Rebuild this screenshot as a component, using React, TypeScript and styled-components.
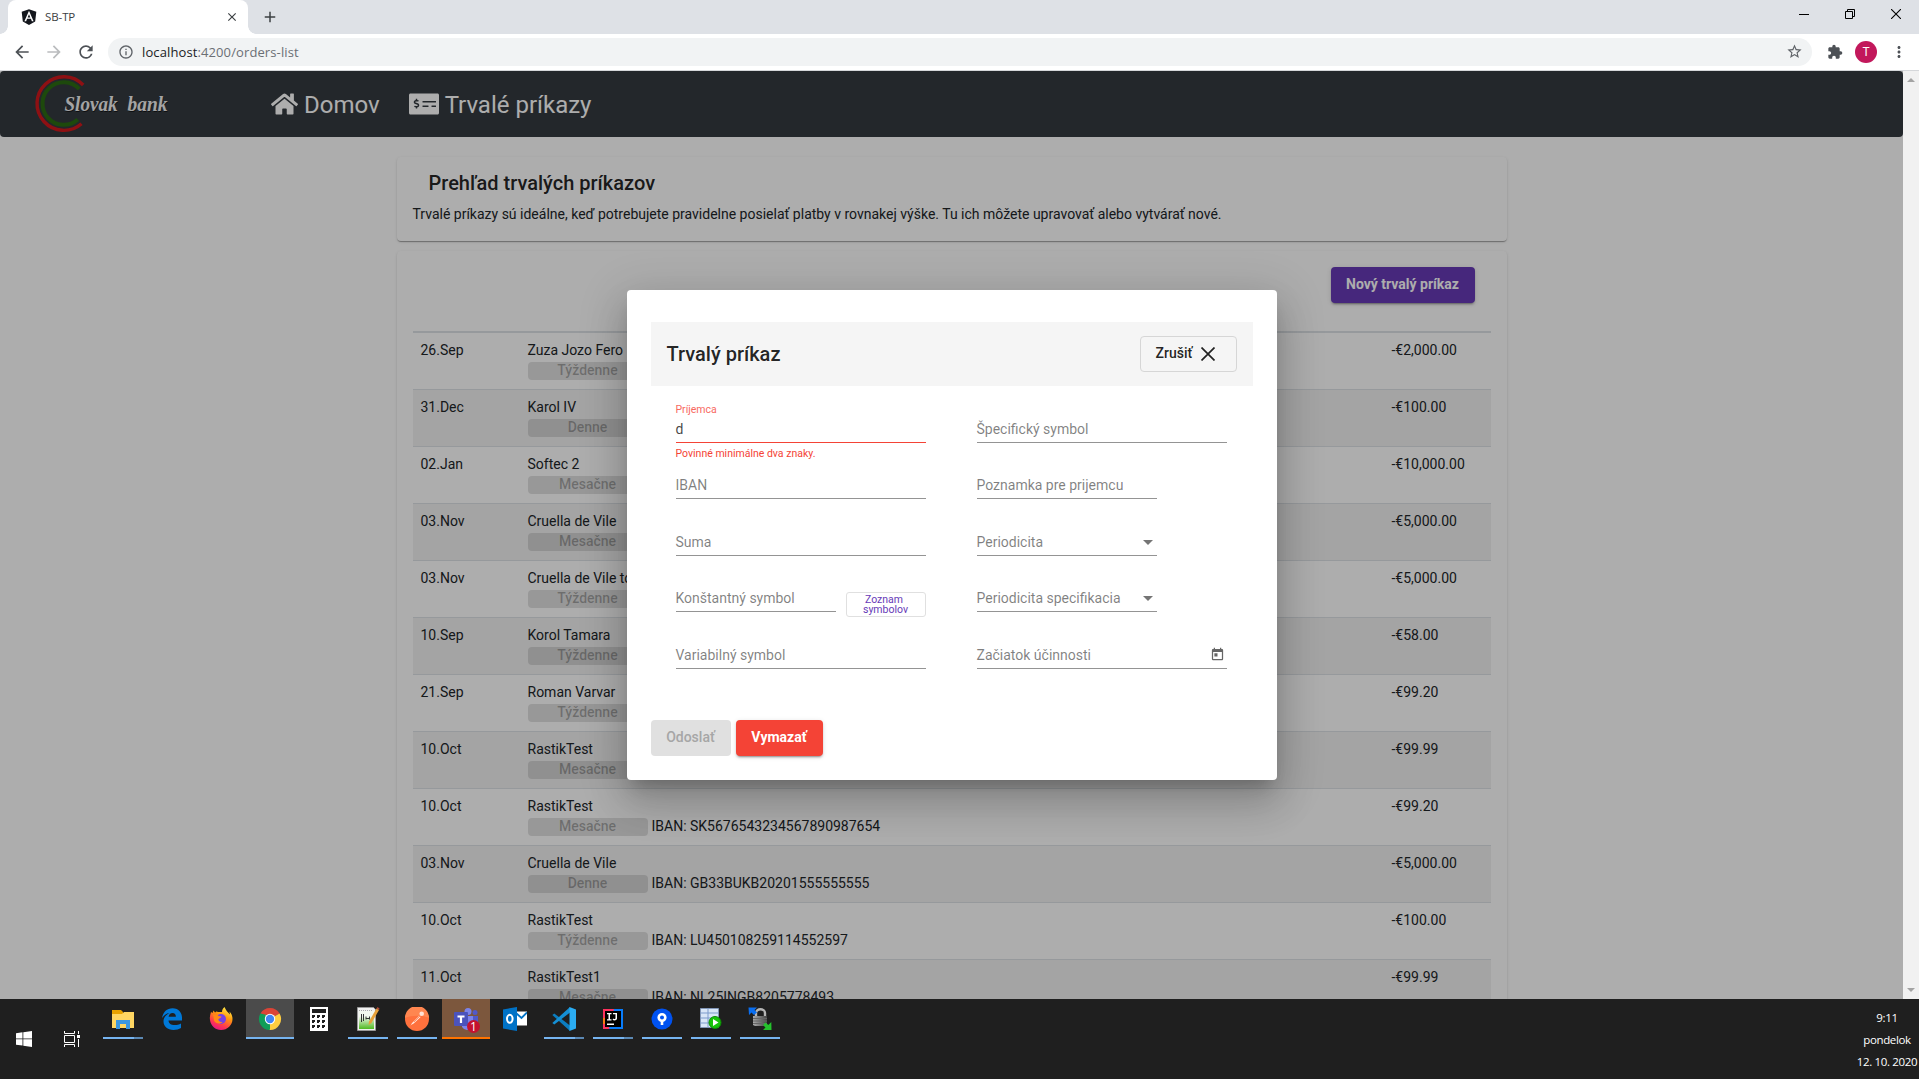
import React from "react";
import styled, { createGlobalStyle, css } from "styled-components";
import { FaAngular, FaHome, FaMoneyCheckAlt } from "react-icons/fa";
import {
  MdArrowBack, MdArrowForward, MdRefresh, MdInfoOutline, MdStarBorder,
  MdExtension, MdMoreVert, MdToday, MdClose, MdAdd,
} from "react-icons/md";

const Global = createGlobalStyle`
  * { box-sizing: border-box; }
  html, body { margin: 0; padding: 0; overflow: hidden; }
  body { font-family: Roboto, "Liberation Sans", sans-serif; font-size: 14px; color: #212529; }
  svg { display: block; flex: none; }
`;

const Screen = styled.div`
  width: 1919px; height: 1079px; display: flex; flex-direction: column; overflow: hidden; background: #fff;
`;

/* ---------- browser chrome ---------- */
const TabStrip = styled.div`
  height: 34px; flex: none; background: #dee1e6; display: flex; padding-left: 8px; color: #3c4043;
`;
const Tab = styled.div`
  position: relative; width: 240px; height: 34px; background: #fff; border-radius: 8px 8px 0 0;
  display: flex; align-items: center; padding: 0 9px 0 12px;
  font: 12px/16px "Open Sans", "Noto Sans", sans-serif;
  &::before, &::after { content: ""; position: absolute; bottom: 0; width: 8px; height: 8px; }
  &::before { left: -8px; background: radial-gradient(circle at 0 0, #dee1e6 7.5px, #fff 8px); }
  &::after { right: -8px; background: radial-gradient(circle at 100% 0, #dee1e6 7.5px, #fff 8px); }
`;
const TabTitle = styled.span`
  flex: 1; margin-left: 7px; font-size: 11.5px; letter-spacing: -0.1px;
`;
const NewTab = styled.div`
  display: flex; align-items: center; margin-left: 13px;
`;
const WindowButtons = styled.div`
  margin-left: auto; display: flex; height: 28px; color: #000;
`;
const WindowButton = styled.div`
  width: 46px; display: grid; place-items: center;
`;
const Toolbar = styled.div`
  height: 37px; flex: none; border-bottom: 1px solid #d5d7da; display: flex; align-items: center; color: #5f6368;
  padding-bottom: 1px;
`;
const NavIcon = styled.div<{ $w: number; $dim?: boolean; $shift?: number }>`
  width: ${(p) => p.$w}px; display: flex; justify-content: center; color: ${(p) => (p.$dim ? "#babcbe" : "#4d5156")};
  padding-left: ${(p) => p.$shift || 0}px;
`;
const Omnibox = styled.div`
  height: 28px; flex: 1; margin-left: 6px; background: #f1f3f4; border-radius: 14px; display: flex; align-items: center;
  padding: 0 9px 0 10px; font: 13px/20px "Open Sans", "Noto Sans", sans-serif; letter-spacing: 0.11px;
`;
const Url = styled.span`
  flex: 1; margin-left: 8px; color: #6b6f74;
  b { font-weight: 400; color: #202124; }
`;
const Avatar = styled.div`
  width: 22px; height: 22px; border-radius: 50%; background: #c2185b; color: #fff; font-size: 12px; line-height: 22px; text-align: center;
`;

/* ---------- page ---------- */
const Viewport = styled.div`
  height: 928px; flex: none; display: flex;
`;
const Page = styled.div`
  position: relative; width: 1903px; height: 928px; overflow: hidden; background: #fff;
`;
const Scrollbar = styled.div`
  width: 16px; background: #f1f1f1; display: flex; flex-direction: column; justify-content: space-between; align-items: center; padding: 7px 0;
`;
const Navbar = styled.nav`
  height: 66px; background: #343a40; border-radius: 4px; display: flex; align-items: center; padding-left: 32px; color: #fff;
`;
const LogoBox = styled.div` width: 239px; `;
const NavLink = styled.a`
  display: flex; align-items: center; font-size: 24px; line-height: 36px; margin-right: 29px; gap: 6px;
  span { padding-top: 2px; }
`;
const Container = styled.main`
  width: 1110px; margin: 20px auto 0; display: flex; flex-direction: column; gap: 10px;
`;
const Card = styled.section<{ $tall?: boolean }>`
  border-radius: 4px; background: #fff; height: ${(p) => (p.$tall ? "1100px" : "84px")};
  padding: ${(p) => (p.$tall ? "16px" : "10px 16px")};
  box-shadow: 0 2px 1px -1px rgba(0,0,0,.2), 0 1px 1px 0 rgba(0,0,0,.14), 0 1px 3px 0 rgba(0,0,0,.12);
`;
const CardTitle = styled.h1`
  margin: 0 0 5px; padding-left: 16px; font-size: 20px; font-weight: 500; line-height: 32px; color: rgba(0,0,0,.87);
`;
const Text = styled.p` margin: 0; line-height: 20px; `;
const CardActions = styled.div`
  display: flex; justify-content: flex-end; padding-right: 16px; height: 64px;
`;
type Kind = "primary" | "warn" | "disabled" | "outline";
const kinds = {
  primary: css`background: #673ab7; color: #fff; font-weight: 700;`,
  warn: css`background: #f44336; color: #fff; font-weight: 700;`,
  disabled: css`background: #e0e0e0; color: #a6a6a6; font-weight: 500;`,
  outline: css`background: transparent; border: 1px solid #d6d6d6; color: rgba(0,0,0,.87); font-weight: 500;`,
};
const Button = styled.button<{ $kind: Kind; $w: number }>`
  width: ${(p) => p.$w}px; height: 36px; padding: 0 0 2px; border: 0; border-radius: 4px;
  display: flex; align-items: center; justify-content: center; white-space: nowrap;
  font-family: inherit; font-size: 14px; line-height: 34px;
  ${(p) => kinds[p.$kind]}
  ${(p) => (p.$kind === "primary" || p.$kind === "warn") &&
    css`box-shadow: 0 3px 1px -2px rgba(0,0,0,.2), 0 2px 2px 0 rgba(0,0,0,.14), 0 1px 5px 0 rgba(0,0,0,.12);`}
`;
const Table = styled.div` border-top: 2px solid #dee2e6; `;
const Row = styled.div<{ $odd: boolean }>`
  height: 57px; border-bottom: 1px solid #dee2e6; padding: 7px 0 0 8px; display: grid;
  grid-template-columns: 107px 864px 1fr; line-height: 20px; background: ${(p) => (p.$odd ? "#f2f2f2" : "#fff")};
`;
const BadgeLine = styled.div` display: flex; gap: 4px; `;
const Badge = styled.span`
  width: 120px; height: 18px; margin-top: 2px; border-radius: 4px; background: rgba(0,0,0,.12); color: rgba(0,0,0,.28);
  font-weight: 500; text-align: center; line-height: 17px;
`;

/* ---------- dialog ---------- */
const Backdrop = styled.div`
  position: absolute; inset: 0; background: rgba(0,0,0,.32); display: flex; align-items: center; justify-content: center;
`;
const Dialog = styled.div`
  width: 650px; height: 490px; padding: 32px 24px 24px; border-radius: 4px; background: #fff;
  box-shadow: 0 11px 15px -7px rgba(0,0,0,.2), 0 24px 38px 3px rgba(0,0,0,.14), 0 9px 46px 8px rgba(0,0,0,.12);
`;
const DialogHeader = styled.header`
  height: 64px; padding: 0 16px; background: #f5f5f5; display: flex; align-items: center; justify-content: space-between;
  h2 { margin: 0; font-size: 20px; font-weight: 500; line-height: 32px; color: rgba(0,0,0,.87); }
  svg { margin: 1px 5px 0 9px; }
`;
const Form = styled.div`
  display: grid; grid-template-columns: 250px 250px; column-gap: 51px; padding-left: 25px;
  grid-template-rows: 57px 56px 57px 56px 57px;
`;
const FieldCell = styled.div` display: flex; align-items: flex-end; gap: 10px; `;
const Field = styled.div<{ $w: number; $bad?: boolean }>`
  position: relative; width: ${(p) => p.$w}px; display: flex; justify-content: space-between; align-items: center;
  border-bottom: 1px solid ${(p) => (p.$bad ? "#f44336" : "#949494")}; height: 25px; padding-bottom: 3px;
  line-height: 20px; color: ${(p) => (p.$bad ? "rgba(0,0,0,.74)" : "rgba(0,0,0,.5)")};
`;
const FloatLabel = styled.span`
  position: absolute; left: 0; top: -14px; font-size: 10.5px; line-height: 12px; color: #f8695f;
`;
const ErrorText = styled.span`
  position: absolute; left: 0; top: 29px; font-size: 10.5px; line-height: 14px; color: #f44336; white-space: nowrap;
`;
const Arrow = styled.i`
  border: 5px solid transparent; border-top-color: rgba(0,0,0,.54); border-bottom: 0; margin: 1px 4px 0 0;
`;
const CalendarSlot = styled.span` color: rgba(0,0,0,.6); margin-right: 2px; `;
const SymbolsButton = styled.button`
  width: 80px; height: 25px; margin-bottom: -5px; padding: 1px 14px 0; background: #fff; border: 1px solid #e0e0e0; border-radius: 3px;
  color: #673ab7; font: 400 10.5px/10px Roboto, sans-serif; text-align: center;
  &::first-line { word-spacing: 0; }
  span { display: block; }
  span:first-child { margin-right: 3px; }
`;
const DialogActions = styled.footer` display: flex; gap: 5px; margin-top: 51px; `;

/* ---------- taskbar ---------- */
const Taskbar = styled.div`
  height: 80px; flex: none; background: #1f1f1f; display: flex; color: #fff;
`;
const SystemButton = styled.div`
  width: 48px; height: 80px; display: grid; place-items: center;
`;
const Apps = styled.div` display: flex; gap: 1px; margin-left: 3px; `;
const TaskButton = styled.div<{ $bg?: string }>`
  width: 48px; height: 40px; display: flex; flex-direction: column; align-items: center; justify-content: space-between;
  background: linear-gradient(${(p) => p.$bg || "transparent"}, ${(p) => p.$bg || "transparent"}) 0 0 / 100% 38px no-repeat;
  padding-top: 8px;
`;
const Underline = styled.div<{ $w: number; $color: string; $stack?: boolean }>`
  width: ${(p) => p.$w}px; height: 2px;
  background: ${(p) => (p.$stack ? `linear-gradient(90deg, ${p.$color} 31px, #5b88b3 31px)` : p.$color)};
`;
const Clock = styled.div`
  margin-left: auto; width: 64px; padding-top: 8px; text-align: center; white-space: nowrap;
  font: 11.5px/22px "Open Sans", "Noto Sans", sans-serif; letter-spacing: -0.35px;
  span { display: block; }
`;

const orders = [
  ["26.Sep", "Zuza Jozo Fero", "Týždenne", "", "-€2,000.00"],
  ["31.Dec", "Karol IV", "Denne", "", "-€100.00"],
  ["02.Jan", "Softec 2", "Mesačne", "", "-€10,000.00"],
  ["03.Nov", "Cruella de Vile", "Mesačne", "", "-€5,000.00"],
  ["03.Nov", "Cruella de Vile to", "Týždenne", "", "-€5,000.00"],
  ["10.Sep", "Korol Tamara", "Týždenne", "", "-€58.00"],
  ["21.Sep", "Roman Varvar", "Týždenne", "", "-€99.20"],
  ["10.Oct", "RastikTest", "Mesačne", "", "-€99.99"],
  ["10.Oct", "RastikTest", "Mesačne", "SK5676543234567890987654", "-€99.20"],
  ["03.Nov", "Cruella de Vile", "Denne", "GB33BUKB20201555555555", "-€5,000.00"],
  ["10.Oct", "RastikTest", "Týždenne", "LU450108259114552597", "-€100.00"],
  ["11.Oct", "RastikTest1", "Mesačne", "NL25INGB8205778493", "-€99.99"],
];

const Logo = () => (
  <svg width="150" height="62" viewBox="32 73 150 62">
    <path d="M83.200 85 A26.800 26.800 0 1 0 81.500 123.700" fill="none" stroke="#d2191c" strokeWidth="3.4" />
    <path d="M79.200 89 A21.200 21.300 0 1 0 77.800 119.500" fill="none" stroke="#2b6c12" strokeWidth="4" />
    <g fontFamily="'Liberation Serif', serif" fontStyle="italic" fontWeight="700" fontSize="21.500">
      <g fill="#14171a">
        <text x="65" y="112" textLength="53" lengthAdjust="spacingAndGlyphs">Slovak</text>
        <text x="128" y="112" textLength="40" lengthAdjust="spacingAndGlyphs">bank</text>
      </g>
      <g fill="#f2f2f2">
        <text x="64.500" y="111" textLength="53" lengthAdjust="spacingAndGlyphs">Slovak</text>
        <text x="127.500" y="111" textLength="40" lengthAdjust="spacingAndGlyphs">bank</text>
      </g>
    </g>
  </svg>
);

const FolderIcon = () => (
  <svg width="24" height="24" viewBox="0 0 24 24">
    <path d="M1 3h9l2 2v4H1z" fill="#e8a200" />
    <path d="M1 7h10l2-2h10v16H1z" fill="#ffd662" />
    <path d="M5 13h14v9h-4v-5H9v5H5z" fill="#3b97e0" />
  </svg>
);
const EdgeIcon = () => (
  <svg width="24" height="24" viewBox="0 0 24 24">
    <path d="M2 11.2C3 5 7 1.2 12.5 1.2 19 1.2 22 6 22 10.500v3H8.500c.2 3.200 2.600 4.600 6 4.600 2.400 0 4.700-.6 6.500-1.700v4.700c-2 1.200-4.700 1.900-7.500 1.900-6 0-10-3.400-10-8.700C3.500 10.500 6 7.700 9.500 6 6 6.500 3.600 8.400 2 11.200zM8.600 9.800h7.300c0-2.400-1.200-3.800-3.400-3.800-2.100 0-3.500 1.500-3.900 3.800z" fill="#0078d7" />
  </svg>
);
const FirefoxIcon = () => (
  <svg width="24" height="24" viewBox="0 0 24 24">
    <defs>
      <linearGradient id="ff" x1="0.8" y1="0" x2="0.3" y2="1">
        <stop offset="0" stopColor="#fff44f" /><stop offset=".4" stopColor="#ff980e" /><stop offset=".75" stopColor="#ff3750" /><stop offset="1" stopColor="#e31587" />
      </linearGradient>
    </defs>
    <path d="M15.500 0c-2 1.500-2.500 3.500-2.500 5h-4.500C8 4 7 5 6 5.500L4.500 3.500 3.500 6 2 5C1 8 .6 10.500 1 13c.8 6 5.500 10 11 10 6.500 0 11.500-5 11.500-11 0-3-1-5.500-3-7.500l.5 3C18.500 5 17 3.500 15.500 0z" fill="url(#ff)" />
    <circle cx="12" cy="12" r="5" fill="#7542e5" />
    <path d="M3.500 8c3-1.500 5-.5 6 1l3 .5c-.5 1.500-2 1.500-3 2.500-.5 2 1.500 3.500 4 3-2 2.500-7 2-8.500-1.500C4.500 11 5 9 3.500 8z" fill="#ff8a16" />
  </svg>
);
const ChromeIcon = () => (
  <svg width="24" height="24" viewBox="0 0 24 24">
    <path d="M12 12 2.470 6.500A11 11 0 0 1 21.530 6.500z" fill="#db4437" />
    <path d="M12 12 21.530 6.500A11 11 0 0 1 12 23z" fill="#ffcd40" />
    <path d="M12 12 12 23A11 11 0 0 1 2.470 6.500z" fill="#0f9d58" />
    <path d="M12 7h9.800L21.500 6.500H11z" fill="#db4437" />
    <path d="M16.300 14.500 11.500 23h.5l5-6z" fill="#ffcd40" />
    <path d="M2.470 6.500 7.700 14.500 9 8z" fill="#0f9d58" />
    <circle cx="12" cy="12" r="5.200" fill="#fff" /><circle cx="12" cy="12" r="4.200" fill="#4285f4" />
  </svg>
);
const CalcIcon = () => (
  <svg width="24" height="24" viewBox="0 0 24 24">
    <path d="M3 0h18v24H3z" fill="#fff" /><path d="M5 2h14v4H5z" fill="#1f1f1f" />
    {[8, 13, 18].map((y) => [5, 10, 15].map((x) => <path key={`${x}-${y}`} d={`M${x} ${y}h3v2h-1v1h-2z`} fill="#1f1f1f" />))}
  </svg>
);
const NotepadIcon = () => (
  <svg width="24" height="24" viewBox="0 0 24 24">
    <defs><linearGradient id="np" x1="0" y1="0" x2="0" y2="1"><stop offset=".3" stopColor="#f2f7ee" /><stop offset="1" stopColor="#4fba20" /></linearGradient></defs>
    <path d="M1.500.5h16l2 2v21h-18z" fill="#f0f0f0" stroke="#999" /><path d="M3 4h15v18H3z" fill="url(#np)" />
    <path d="M3 3.500h14" stroke="#aaa" strokeDasharray="1 1" />
    <path d="M5.500 7v8M7.500 7v7M10 11.500h4M10 9.500v3M13.500 9.500v3" stroke="#333" fill="none" />
    <path d="M20.500 1.500 23 3l-7.500 13-3 2 .5-3.500z" fill="#e7a13a" /><path d="m20.500 1.500 1-1.500L23.500 1.500 23 3z" fill="#b34d3b" />
  </svg>
);
const PostmanIcon = () => (
  <svg width="24" height="24" viewBox="0 0 24 24">
    <circle cx="12" cy="12" r="12" fill="#ff713d" /><path d="M0 11A12 12 0 0 1 24 11c-6-3-17-3-24 0z" fill="#ff8650" />
    <path d="m5 19.500 2-3.500 7-7 1.700 1-7 6.500-2.700 1.500z" fill="#ffe9df" /><circle cx="16.700" cy="6.800" r="2.300" fill="#ffe2d5" /><path d="m9 15 6-6" stroke="#ff713d" strokeWidth=".7" />
  </svg>
);
const TeamsIcon = () => (
  <svg width="28" height="26" viewBox="0 0 28 26">
    <circle cx="16" cy="4.500" r="3.500" fill="#7b83eb" /><circle cx="23" cy="5.500" r="2.500" fill="#5059c9" />
    <path d="M18 9h8v8a4 4 0 0 1-8 2z" fill="#5059c9" /><path d="M10 9h11v9a6 6 0 0 1-11 2z" fill="#7b83eb" />
    <rect x="2" y="5" width="14" height="14" rx="1" fill="#4b53bc" /><path d="M5.500 8.500h7v2h-2.400V16H7.900v-5.500H5.500z" fill="#fff" />
    <circle cx="21.500" cy="19.500" r="6.500" fill="#c4122f" />
    <text x="21.500" y="24" fontFamily="Open Sans, sans-serif" fontSize="12" fill="#fff" textAnchor="middle">1</text>
  </svg>
);
const OutlookIcon = () => (
  <svg width="24" height="24" viewBox="0 0 24 24">
    <path d="M12 4.500h12v14H12z" fill="#fff" /><path d="m13 6 5.500 5L24 5.500" stroke="#0072c6" strokeWidth="1.800" fill="none" />
    <path d="M0 2.500 14 0v24L0 21.500z" fill="#0072c6" /><ellipse cx="6.800" cy="11.800" rx="2.800" ry="4" fill="none" stroke="#fff" strokeWidth="2" />
  </svg>
);
const CodeIcon = () => (
  <svg width="24" height="24" viewBox="0 0 24 24">
    <path d="M.3 8 2.300 6.500 18 18.500V24z" fill="#0c7dbf" /><path d="M.3 16 2.300 17.500 18 5.500V0z" fill="#1590d5" />
    <path d="M17.500 0 24 2.500v19L17.500 24z" fill="#2bacf2" />
  </svg>
);
const IdeaIcon = () => (
  <svg width="24" height="24" viewBox="0 0 24 24">
    <path d="M2 2h20v20H2z" fill="#087cfa" /><path d="M2 2h11L8 22H2z" fill="#fe315d" /><path d="M2 11h3v6H2z" fill="#f97a12" />
    <path d="M4 4h16v16H4z" fill="#000" /><path d="M6 16.500h7V18H6zM6 6h4.500v1.200H9v5h1.500v1.200H6v-1.200h1.500v-5H6zM12 6h4v5.500c0 2-3.500 2.600-4.500 1l1-1c.6.800 2 .6 2-.3V7.200H12z" fill="#fff" />
  </svg>
);
const SourceIcon = () => (
  <svg width="24" height="24" viewBox="0 0 24 24">
    <circle cx="12" cy="12" r="10.500" fill="#0052f0" /><circle cx="12" cy="10.500" r="3.300" fill="none" stroke="#fff" strokeWidth="2.600" /><path d="M10.700 14h2.600v4h-2.600z" fill="#fff" />
  </svg>
);
const ServerIcon = () => (
  <svg width="24" height="24" viewBox="0 0 24 24">
    <path d="M1.500 1.500h18v19h-18z" fill="#d8e6f7" stroke="#8195b5" /><path d="M1.500 6h18M1.500 11h18M1.500 16h18M9 1.500v19" stroke="#7c9bcb" />
    <circle cx="16" cy="15.500" r="6" fill="#17c40b" stroke="#0b8c04" /><path d="m14 12 5.500 3.500L14 19z" fill="#fff" />
  </svg>
);
const LockIcon = () => (
  <svg width="24" height="24" viewBox="0 0 24 24">
    <path d="M8 9V6c0-5 9-5 9 0v4" fill="none" stroke="#b5b5b5" strokeWidth="2.400" />
    <defs><linearGradient id="lk"><stop offset="0" stopColor="#aaa" /><stop offset=".5" stopColor="#777" /><stop offset="1" stopColor="#444" /></linearGradient></defs>
    <path d="M5 9h14v9l-2 1H7l-2-1z" fill="url(#lk)" /><path d="M5 11.500h14M5 14h14M5 16.500h14" stroke="#666" />
    <path d="M.5.500H9L6.500 3 9 5.500 6 8 3.500 5.500 1 8z" fill="#0a6ef0" /><path d="M23.500 23H15l2.500-2.500-2.500-2.500 2.500-2.500 2.800 2.500 3-3z" fill="#24c22c" />
  </svg>
);

const blue = "#76b4f0";
const apps: { icon: React.ReactNode; bg?: string; w?: number; color?: string; stack?: boolean }[] = [
  { icon: <FolderIcon />, w: 40, stack: true },
  { icon: <EdgeIcon /> },
  { icon: <FirefoxIcon /> },
  { icon: <ChromeIcon />, bg: "#4b4b4b", w: 48 },
  { icon: <CalcIcon /> },
  { icon: <NotepadIcon />, w: 40 },
  { icon: <PostmanIcon />, w: 40 },
  { icon: <TeamsIcon />, bg: "#7c573d", w: 48, color: "#ff7300" },
  { icon: <OutlookIcon /> },
  { icon: <CodeIcon />, w: 40, stack: true },
  { icon: <IdeaIcon />, w: 40, stack: true },
  { icon: <SourceIcon />, w: 40 },
  { icon: <ServerIcon />, w: 40 },
  { icon: <LockIcon />, w: 40 },
];

const BrowserChrome = () => (
  <>
    <TabStrip>
      <Tab>
        <FaAngular size={18} color="#13161c" />
        <TabTitle>SB-TP</TabTitle>
        <MdClose size={14} />
      </Tab>
      <NewTab><MdAdd size={18} /></NewTab>
      <WindowButtons>
        <WindowButton><svg width="10" height="10"><path d="M0 5.500h10" stroke="#000" /></svg></WindowButton>
        <WindowButton><svg width="10" height="10"><path d="M.5 2.500h7v7h-7zM2.500 2.500v-2h7v7h-2" stroke="#000" fill="none" /></svg></WindowButton>
        <WindowButton><svg width="10" height="10"><path d="M0 0 10 10M10 0 0 10" stroke="#000" strokeWidth="1.100" /></svg></WindowButton>
      </WindowButtons>
    </TabStrip>
    <Toolbar>
      <NavIcon $w={44}><MdArrowBack size={20} /></NavIcon>
      <NavIcon $w={20} $dim><MdArrowForward size={20} /></NavIcon>
      <NavIcon $w={38} $shift={6}><MdRefresh size={20} /></NavIcon>
      <Omnibox>
        <MdInfoOutline size={16} />
        <Url><b>localhost</b>:4200/orders-list</Url>
        <MdStarBorder size={17} />
      </Omnibox>
      <NavIcon $w={43} $shift={2}><MdExtension size={16} /></NavIcon>
      <Avatar>T</Avatar>
      <NavIcon $w={42} $shift={1}><MdMoreVert size={18} /></NavIcon>
    </Toolbar>
  </>
);

const OrderDialog = () => (
  <Backdrop>
    <Dialog>
      <DialogHeader>
        <h2>Trvalý príkaz</h2>
        <Button $kind="outline" $w={97}>
          Zrušiť
          <svg width="14" height="14"><path d="M.5.500 13.500 13.500M13.500.500.500 13.500" stroke="#222" strokeWidth="1.700" /></svg>
        </Button>
      </DialogHeader>
      <Form>
        <FieldCell><Field $w={250} $bad><FloatLabel>Príjemca</FloatLabel>d<ErrorText>Povinné minimálne dva znaky.</ErrorText></Field></FieldCell>
        <FieldCell><Field $w={250}>Špecifický symbol</Field></FieldCell>
        <FieldCell><Field $w={250}>IBAN</Field></FieldCell>
        <FieldCell><Field $w={180}>Poznamka pre prijemcu</Field></FieldCell>
        <FieldCell><Field $w={250}>Suma</Field></FieldCell>
        <FieldCell><Field $w={180}>Periodicita<Arrow /></Field></FieldCell>
        <FieldCell><Field $w={160}>Konštantný symbol</Field><SymbolsButton><span>Zoznam</span><span>symbolov</span></SymbolsButton></FieldCell>
        <FieldCell><Field $w={180}>Periodicita specifikacia<Arrow /></Field></FieldCell>
        <FieldCell><Field $w={250}>Variabilný symbol</Field></FieldCell>
        <FieldCell><Field $w={250}>Začiatok účinnosti<CalendarSlot><MdToday size={15} /></CalendarSlot></Field></FieldCell>
      </Form>
      <DialogActions>
        <Button $kind="disabled" $w={80}>Odoslať</Button>
        <Button $kind="warn" $w={87}>Vymazať</Button>
      </DialogActions>
    </Dialog>
  </Backdrop>
);

export default function App() {
  return (
    <Screen>
      <Global />
      <BrowserChrome />
      <Viewport>
        <Page>
          <Navbar>
            <LogoBox><Logo /></LogoBox>
            <NavLink><FaHome width={27} height={24} style={{ width: 27, height: 24 }} /><span>Domov</span></NavLink>
            <NavLink><FaMoneyCheckAlt style={{ width: 30, height: 24 }} /><span>Trvalé príkazy</span></NavLink>
          </Navbar>
          <Container>
            <Card>
              <CardTitle>Prehľad trvalých príkazov</CardTitle>
              <Text>Trvalé príkazy sú ideálne, keď potrebujete pravidelne posielať platby v rovnakej výške. Tu ich môžete upravovať alebo vytvárať nové.</Text>
            </Card>
            <Card $tall>
              <CardActions><Button $kind="primary" $w={144}>Nový trvalý príkaz</Button></CardActions>
              <Table>
                {orders.map(([date, name, period, iban, amount], i) => (
                  <Row key={i} $odd={i % 2 === 1}>
                    <span>{date}</span>
                    <div>
                      {name}
                      <BadgeLine><Badge>{period}</Badge>{iban && <span>IBAN: {iban}</span>}</BadgeLine>
                    </div>
                    <span>{amount}</span>
                  </Row>
                ))}
              </Table>
            </Card>
          </Container>
          <OrderDialog />
        </Page>
        <Scrollbar>
          <svg width="8" height="4"><path d="M4 0 8 4H0z" fill="#a3a3a3" /></svg>
          <svg width="8" height="4"><path d="M4 4 8 0H0z" fill="#a3a3a3" /></svg>
        </Scrollbar>
      </Viewport>
      <Taskbar>
        <SystemButton>
          <svg width="16" height="16"><path d="M0 2.200 6.500 1.300v6.200H0zM7.300 1.200 16 0v7.500H7.300zM0 8.300h6.500v6.300L0 13.700zM7.300 8.300H16V16l-8.700-1.200z" fill="#fff" /></svg>
        </SystemButton>
        <SystemButton>
          <svg width="16" height="16" fill="none" stroke="#fff"><path d="M.5 0v2.500h10V0M.5 16v-2.500h10V16M.5 4.500h10v7H.5zM14.500 0v3M14.500 8v8" /><path d="M13 4h3v3h-3z" fill="#fff" stroke="none" /></svg>
        </SystemButton>
        <Apps>
          {apps.map((a, i) => (
            <TaskButton key={i} $bg={a.bg}>
              {a.icon}
              {a.w && <Underline $w={a.w} $color={a.color || blue} $stack={a.stack} />}
            </TaskButton>
          ))}
        </Apps>
        <Clock><span>9:11</span><span>pondelok</span><span>12. 10. 2020</span></Clock>
      </Taskbar>
    </Screen>
  );
}
